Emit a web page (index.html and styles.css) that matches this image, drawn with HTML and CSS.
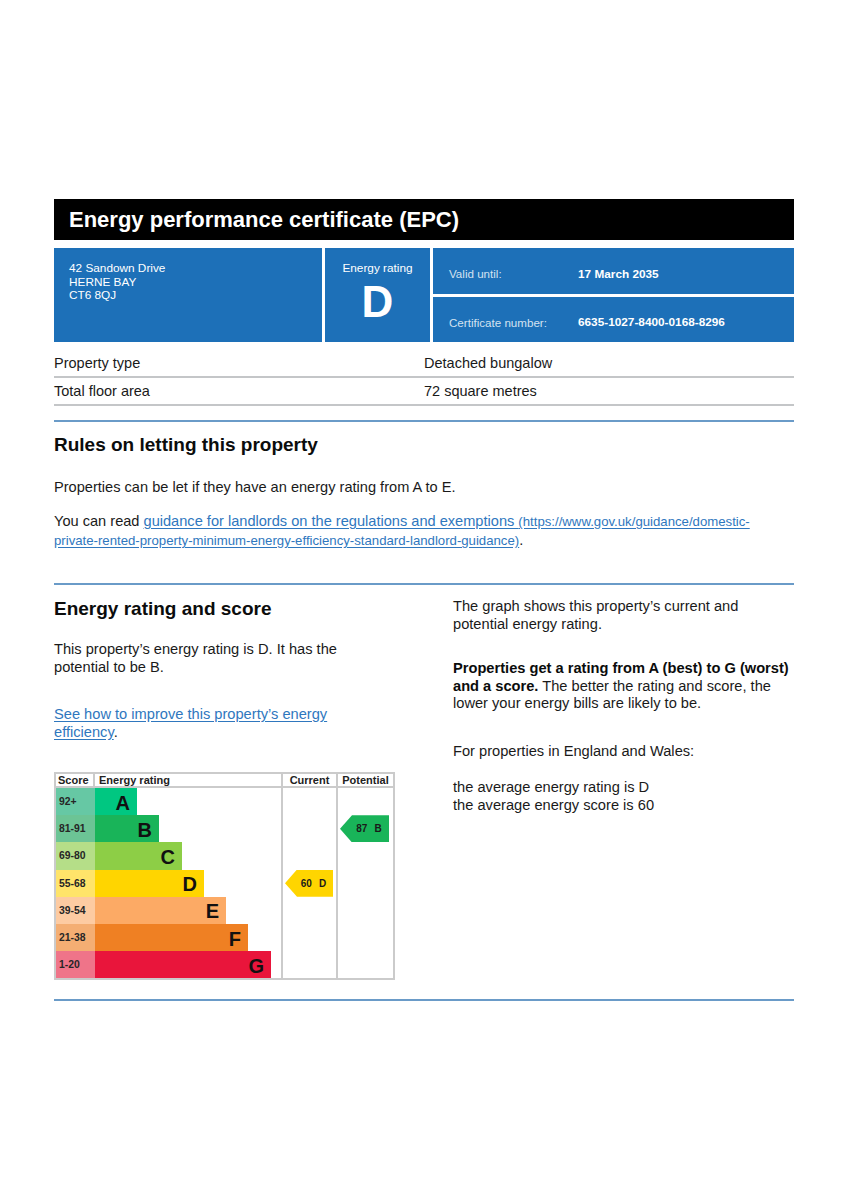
FILE: index.html
```html
<!DOCTYPE html>
<html lang="en">
<head>
<meta charset="utf-8">
<title>Energy performance certificate (EPC)</title>
<link rel="stylesheet" href="styles.css">
</head>
<body>
<main class="page">
  <h1 class="title">Energy performance certificate (EPC)</h1>

  <div class="summary">
    <div class="cell address">42 Sandown Drive<br>HERNE BAY<br>CT6 8QJ</div>
    <div class="cell rating">
      <div class="rating-label">Energy rating</div>
      <div class="rating-letter">D</div>
    </div>
    <div class="info">
      <div class="cell info-row"><span class="info-label">Valid until:</span><span class="info-value">17 March 2035</span></div>
      <div class="cell info-row"><span class="info-label">Certificate number:</span><span class="info-value">6635-1027-8400-0168-8296</span></div>
    </div>
  </div>

  <dl class="props">
    <div class="prop-row"><dt>Property type</dt><dd>Detached bungalow</dd></div>
    <div class="prop-row"><dt>Total floor area</dt><dd>72 square metres</dd></div>
  </dl>

  <section class="section rules">
    <h2 class="heading">Rules on letting this property</h2>
    <p class="text rules-p1">Properties can be let if they have an energy rating from A to E.</p>
    <p class="text rules-p2">You can read <a class="link" href="#">guidance for landlords on the regulations and exemptions <span class="url">(https://www.gov.uk/guidance/domestic-private-rented-property-minimum-energy-efficiency-standard-landlord-guidance)</span></a>.</p>
  </section>

  <section class="section score">
    <div class="score-left">
      <h2 class="heading">Energy rating and score</h2>
      <p class="text2 left-p">This property’s energy rating is D. It has the potential to be B.</p>
      <p class="text2 left-link"><a class="link" href="#">See how to improve this property’s energy efficiency</a>.</p>

      <div class="chart">
        <div class="ch ch-score">Score</div>
        <div class="ch ch-rating">Energy rating</div>
        <div class="ch ch-current">Current</div>
        <div class="ch ch-potential">Potential</div>
        <div class="col-line col3"></div>
        <div class="col-line col4"></div>

        <div class="sc sc-a r1">92+</div>
        <div class="band r1"><div class="bar bar-a" style="width:42px">A</div></div>
        <div class="sc sc-b r2">81-91</div>
        <div class="band r2"><div class="bar bar-b" style="width:64px">B</div></div>
        <div class="sc sc-c r3">69-80</div>
        <div class="band r3"><div class="bar bar-c" style="width:87px">C</div></div>
        <div class="sc sc-d r4">55-68</div>
        <div class="band r4"><div class="bar bar-d" style="width:109px">D</div></div>
        <div class="sc sc-e r5">39-54</div>
        <div class="band r5"><div class="bar bar-e" style="width:131px">E</div></div>
        <div class="sc sc-f r6">21-38</div>
        <div class="band r6"><div class="bar bar-f" style="width:153px">F</div></div>
        <div class="sc sc-g r7">1-20</div>
        <div class="band r7"><div class="bar bar-g" style="width:176px">G</div></div>

        <div class="arrow arrow-current r4"><span>60</span><span>D</span></div>
        <div class="arrow arrow-potential r2"><span>87</span><span>B</span></div>
      </div>
    </div>

    <div class="score-right">
      <p class="text2 right-p1">The graph shows this property’s current and potential energy rating.</p>
      <p class="text2 right-p2"><strong>Properties get a rating from A (best) to G (worst) and a score.</strong> The better the rating and score, the lower your energy bills are likely to be.</p>
      <p class="text2 right-p3">For properties in England and Wales:</p>
      <p class="text2 right-p4">the average energy rating is D<br>the average energy score is 60</p>
    </div>
  </section>
</main>
</body>
</html>
```

FILE: styles.css
```css
* { box-sizing: border-box; }

html, body {
  margin: 0;
  padding: 0;
  background: #ffffff;
}

body {
  font-family: "Liberation Sans", Arial, sans-serif;
  color: #0b0c0c;
}

.page {
  width: 847px;
  padding: 199px 53px 40px 54px;
}

.title {
  margin: 0;
  height: 41px;
  background: #000000;
  color: #ffffff;
  font-size: 22px;
  font-weight: bold;
  line-height: 41px;
  padding-left: 15px;
}

.summary {
  margin-top: 8px;
  height: 94px;
  display: grid;
  grid-template-columns: 268px 105px 1fr;
  gap: 3px;
}

.cell {
  background: #1d70b8;
  color: #ffffff;
}

.address {
  padding: 14px 15px;
  font-size: 11.8px;
  line-height: 13.5px;
}

.rating {
  text-align: center;
  padding-top: 14px;
}

.rating-label {
  font-size: 11.8px;
  line-height: 13.5px;
}

.rating-letter {
  margin-top: 4px;
  font-size: 44px;
  font-weight: bold;
  line-height: 44px;
}

.info {
  display: grid;
  grid-template-rows: 46px 1fr;
  gap: 3px;
}

.info-row {
  display: grid;
  grid-template-columns: 129px 1fr;
  align-items: center;
  padding: 5px 0 0 16px;
  font-size: 11.6px;
}

.info-label {
  color: #d3e2f1;
}

.info-value {
  font-weight: bold;
  font-size: 11.8px;
}

.props {
  margin: 8px 0 0 0;
}

.prop-row {
  display: grid;
  grid-template-columns: 370px 1fr;
  height: 28px;
  align-items: center;
  border-bottom: 2px solid #c4c6c8;
  font-size: 14.5px;
  color: #1a1a1a;
}

.prop-row dt, .prop-row dd {
  margin: 0;
}

.section {
  border-top: 2px solid #6a9bc8;
}

.rules {
  margin-top: 14px;
  padding: 12px 0 33px 0;
}

.heading {
  margin: 0;
  font-size: 19px;
  font-weight: bold;
  line-height: 22px;
}

.text {
  margin: 0;
  font-size: 14.6px;
  line-height: 19px;
  color: #1a1a1a;
}

.rules-p1 { margin-top: 22px; }

.rules-p2 {
  margin-top: 15px;
  max-width: 706px;
}

.link {
  color: #2f77be;
  text-decoration: underline;
  text-underline-offset: 2px;
}

.url {
  font-size: 13.2px;
}

.score {
  margin-top: 0;
  padding-top: 13px;
  display: grid;
  grid-template-columns: 341px 341px;
  column-gap: 58px;
  border-bottom: 2px solid #6a9bc8;
  padding-bottom: 19px;
}

.text2 {
  margin: 0;
  font-size: 14.65px;
  line-height: 17.5px;
  color: #1a1a1a;
}

.left-p {
  margin-top: 21px;
  max-width: 300px;
}

.left-link {
  margin-top: 30px;
  max-width: 300px;
}

.right-p1 { margin-top: 0; }
.right-p2 { margin-top: 27px; }
.right-p3 { margin-top: 30px; }
.right-p4 { margin-top: 19px; }

.right-p2 strong {
  font-weight: bold;
  color: #0b0c0c;
}

/* Chart */
.chart {
  margin-top: 31px;
  width: 341px;
  display: grid;
  grid-template-columns: 39px 186px 55px 57px;
  grid-template-rows: 14px repeat(7, 27.2px);
  border: 2px solid #cbcbcb;
}

.ch {
  grid-row: 1;
  font-size: 11px;
  font-weight: bold;
  line-height: 12px;
  border-bottom: 2px solid #cbcbcb;
  color: #222222;
  white-space: nowrap;
}

.ch-score {
  grid-column: 1;
  padding-left: 2px;
  border-right: 2px solid #cbcbcb;
}

.ch-rating {
  grid-column: 2;
  padding-left: 4px;
}

.ch-current {
  grid-column: 3;
  text-align: center;
  padding-left: 2px;
}

.ch-potential {
  grid-column: 4;
  text-align: center;
  padding-left: 2px;
}

.col-line {
  grid-row: 1 / -1;
  border-left: 2px solid #cbcbcb;
}

.col3 { grid-column: 3; }
.col4 { grid-column: 4; }

.r1 { grid-row: 2; }
.r2 { grid-row: 3; }
.r3 { grid-row: 4; }
.r4 { grid-row: 5; }
.r5 { grid-row: 6; }
.r6 { grid-row: 7; }
.r7 { grid-row: 8; }

.sc {
  grid-column: 1;
  display: flex;
  align-items: center;
  padding-left: 3px;
  font-size: 10.4px;
  font-weight: bold;
  color: #262626;
}

.band {
  grid-column: 2;
}

.bar {
  height: 100%;
  display: flex;
  align-items: center;
  justify-content: flex-end;
  padding-right: 7px;
  font-size: 20px;
  font-weight: bold;
  color: #111111;
  line-height: 1;
  padding-top: 2px;
}

.sc-a { background: #66c8a4; }
.sc-b { background: #6cc495; }
.sc-c { background: #b5de88; }
.sc-d { background: #ffe46a; }
.sc-e { background: #fdcba2; }
.sc-f { background: #f4ae73; }
.sc-g { background: #ef7489; }

.bar-a { background: #00c781; }
.bar-b { background: #19b459; }
.bar-c { background: #8dce46; }
.bar-d { background: #ffd500; }
.bar-e { background: #fcaa65; }
.bar-f { background: #ef8023; }
.bar-g { background: #e9153b; }

.arrow {
  margin-left: 4px;
  width: 48px;
  height: 100%;
  display: flex;
  align-items: center;
  justify-content: center;
  gap: 7px;
  padding-left: 9px;
  font-size: 10px;
  font-weight: bold;
  color: #1a1a1a;
  clip-path: polygon(12px 0, 100% 0, 100% 100%, 12px 100%, 0 50%);
}

.arrow-current {
  grid-column: 3;
  background: #ffd500;
}

.arrow-potential {
  grid-column: 4;
  width: 49px;
  background: #19b459;
}
```
